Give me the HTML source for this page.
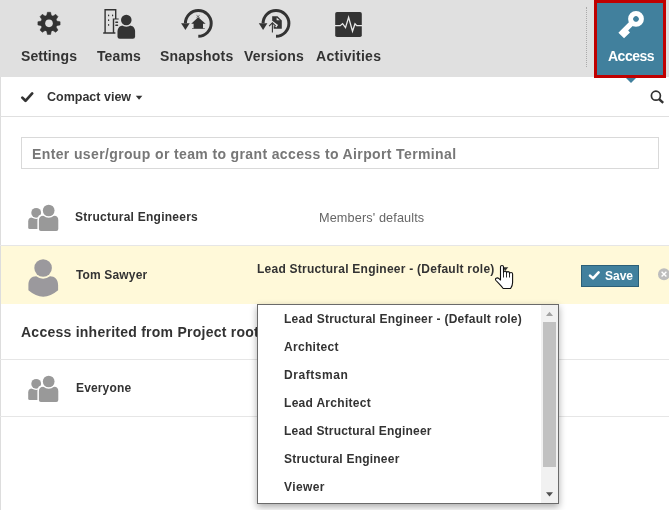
<!DOCTYPE html>
<html><head><meta charset="utf-8">
<style>
*{margin:0;padding:0;box-sizing:border-box}
html,body{width:669px;height:510px;overflow:hidden;background:#fff}
body{position:relative;font-family:"Liberation Sans",sans-serif;color:#333}
.a{position:absolute;white-space:nowrap;line-height:1;will-change:transform}
svg.a{overflow:visible}
.lbl{font-size:14px;font-weight:bold;color:#333}
.b{font-weight:bold}
</style></head><body>
<!-- toolbar -->
<div class="a" style="left:0;top:0;width:669px;height:77px;background:#e0e0e0"></div>
<svg class="a" style="left:0;top:0" width="669" height="77" viewBox="0 0 669 77">
 <!-- gear -->
 <g transform="translate(49 23.35)" fill="#333">
  <circle r="8.4"/>
  <g id="tooth"><path d="M-1.6 -11.1 L1.6 -11.1 L2.6 -6.5 L-2.6 -6.5 Z" stroke="#333" stroke-width="0.5" stroke-linejoin="round"/></g>
  <use href="#tooth" transform="rotate(45)"/><use href="#tooth" transform="rotate(90)"/><use href="#tooth" transform="rotate(135)"/>
  <use href="#tooth" transform="rotate(180)"/><use href="#tooth" transform="rotate(225)"/><use href="#tooth" transform="rotate(270)"/><use href="#tooth" transform="rotate(315)"/>
  <circle r="3.8" fill="#e0e0e0"/>
 </g>
 <!-- teams -->
 <g fill="#333">
  <path d="M104.4 9 H116.4 V18.6 H118.7 V19.6 H114.2 V32.2 H115.4 V33.7 H103.2 V32.2 H104.4 Z M105.8 10.4 V32.2 H112.8 V18.6 H115 V10.4 Z" fill-rule="evenodd"/>
  <rect x="108" y="14.4" width="1.2" height="1.8" rx="0.5"/><rect x="112" y="14.4" width="1.2" height="1.8" rx="0.5"/>
  <rect x="108" y="19.2" width="1.2" height="1.8" rx="0.5"/><rect x="108" y="24" width="1.2" height="1.8" rx="0.5"/>
  <rect x="115.2" y="21.6" width="3" height="1.3" rx="0.6"/><rect x="115.2" y="24.6" width="3" height="1.3" rx="0.6"/>
  <path d="M117.5 36.6 V31.8 C117.5 27.6 120 25.6 123.5 25.6 H129.1 C132.6 25.6 135.1 27.6 135.1 31.8 V36.6 Q135.1 38.8 132.9 38.8 H119.7 Q117.5 38.8 117.5 36.6 Z"/>
  <circle cx="126.3" cy="20" r="6.7" fill="#e0e0e0"/>
  <circle cx="126.3" cy="20" r="5.3"/>
 </g>
 <!-- snapshots -->
 <g fill="none" stroke="#333" stroke-width="3">
  <path d="M198.3 36.25 A12.9 12.9 0 1 0 185.4 23.35"/>
  <path d="M276 36.25 A12.9 12.9 0 1 0 263.1 23.35"/>
 </g>
 <g fill="#333">
  <path d="M181.1 23.2 H189.7 L185.4 29.9 Z"/>
  <path d="M258.8 23.2 H267.4 L263.1 29.9 Z"/>
  <path d="M191.2 23.8 L198.2 17.2 L205.6 23.8 H203 V28.4 H193.6 V23.8 Z"/>
  <path d="M192 28.3 H204.8 V28.9 H192 Z"/>
  <path d="M196.5 15.3 L199.6 17.6 M199.6 15.3 L196.5 17.6" stroke="#333" stroke-width="0.6"/>
  <!-- versions doc -->
  <path d="M272.2 16.3 H277.5 L281.8 20.6 V28.7 H272.2 Z"/>
  <path d="M276.6 17.4 L279.8 20.3 H276.6 Z" fill="#e0e0e0"/>
  <path d="M269.1 26.2 L272.4 22.7 L277.2 26.2" fill="none" stroke="#e0e0e0" stroke-width="3"/>
  <path d="M272.4 23.5 V32.6" fill="none" stroke="#e0e0e0" stroke-width="2.6"/>
  <path d="M269.1 26.2 L272.4 22.9 L275.7 26.2" fill="none" stroke="#333" stroke-width="1.1"/>
  <path d="M272.4 23.2 V32.6" fill="none" stroke="#333" stroke-width="1.1"/>
 </g>
 <!-- activities -->
 <rect x="335.2" y="12" width="26.6" height="25" rx="1.8" fill="#333"/>
 <path d="M335 25.7 H340.2 L342.6 23.6 L345.5 27.6 L348.6 17.4 L352.5 31.3 L355 23.8 L356.8 25.7 H362" fill="none" stroke="#e8e8e8" stroke-width="1.3" stroke-linejoin="miter"/>
</svg>
<div class="a lbl" style="left:21px;top:49px;letter-spacing:0.1px">Settings</div>
<div class="a lbl" style="left:97px;top:49px;letter-spacing:0.1px">Teams</div>
<div class="a lbl" style="left:160px;top:49px;letter-spacing:0.2px">Snapshots</div>
<div class="a lbl" style="left:244px;top:49px;letter-spacing:0.2px">Versions</div>
<div class="a lbl" style="left:316px;top:49px;letter-spacing:0.3px">Activities</div>
<!-- dotted sep -->
<div class="a" style="left:586px;top:7px;width:1px;height:60px;border-left:1px dotted #aaa"></div>
<!-- access -->
<div class="a" style="left:594px;top:0;width:72px;height:78px;background:#c00000"></div>
<div class="a" style="left:597px;top:3px;width:66px;height:72px;background:#41809d"></div>
<svg class="a" style="left:0;top:0" width="669" height="90" viewBox="0 0 669 90">
 <g transform="translate(636 18.9) rotate(45)" fill="#fff">
  <path fill-rule="evenodd" d="M0 -7.9 A7.9 7.9 0 1 1 0 7.9 A7.9 7.9 0 1 1 0 -7.9 Z M0 -2.8 A2.8 2.8 0 1 0 0 2.8 A2.8 2.8 0 1 0 0 -2.8 Z"/>
  <path d="M-2.7 6 H2.7 V13.8 H5.3 V22.2 H-2.7 Z"/>
 </g>
 <path d="M626 78 H636 L631 83 Z" fill="#41809d"/>
</svg>
<div class="a lbl" style="left:608px;top:49px;color:#fff;font-size:14px;letter-spacing:-0.5px">Access</div>
<!-- compact row -->
<div class="a" style="left:0;top:77px;width:1px;height:433px;background:#ddd"></div>
<svg class="a" style="left:0;top:77" width="669" height="40" viewBox="0 77 669 40">
 <path d="M22.3 97.6 L25.5 100.8 L32.2 93.4" fill="none" stroke="#333" stroke-width="2.7" stroke-linecap="round" stroke-linejoin="round"/>
 <path d="M135.8 95.8 H142.3 L139.05 99.8 Z" fill="#333"/>
 <circle cx="655.9" cy="95.7" r="4.5" fill="none" stroke="#333" stroke-width="1.7"/>
 <path d="M659 99 L663.2 102.8" stroke="#333" stroke-width="2.4"/>
</svg>
<div class="a b" style="left:47px;top:91px;font-size:12.5px">Compact view</div>
<div class="a" style="left:0;top:116px;width:669px;height:1px;background:#e0e0e0"></div>
<!-- input -->
<div class="a" style="left:21px;top:137px;width:638px;height:32px;border:1px solid #d9d9d9"></div>
<div class="a b" style="left:31.5px;top:147px;font-size:14px;color:#777;letter-spacing:0.37px">Enter user/group or team to grant access to Airport Terminal</div>
<!-- row 1 -->
<svg class="a" style="left:0;top:0" width="669" height="510" viewBox="0 0 669 510">
 <g id="grp" fill="#999">
  <path d="M28.2 227.5 V221.4 Q28.2 217.4 32.2 217.4 H40.5 Q44.5 217.4 44.5 221.4 V229 H29.7 Q28.2 229 28.2 227.5 Z"/>
  <circle cx="36.2" cy="212.8" r="6.2" fill="#fff"/>
  <circle cx="36.2" cy="212.8" r="4.9"/>
  <path d="M37.4 231.9 V220.3 Q37.4 214.3 42.4 214.3 H55.3 Q59.8 214.3 59.8 220.3 V229.4 Q59.8 231.9 57.3 231.9 H39.9 Q37.4 231.9 37.4 229.4 Z" fill="#fff"/>
  <path d="M38.9 230.9 V220.3 Q38.9 215.8 43.4 215.8 H54.3 Q58.3 215.8 58.3 220.3 V228.9 Q58.3 230.9 56.3 230.9 H40.9 Q38.9 230.9 38.9 228.9 Z"/>
  <circle cx="48.7" cy="210.5" r="7.3" fill="#fff"/>
  <circle cx="48.7" cy="210.5" r="5.85"/>
 </g>
 <use href="#grp" transform="translate(0 171)"/>
</svg>
<div class="a b" style="left:75px;top:211px;font-size:12px;letter-spacing:0.25px">Structural Engineers</div>
<div class="a" style="left:319px;top:212px;font-size:12.7px;color:#666;letter-spacing:0.12px">Members' defaults</div>
<div class="a" style="left:0;top:245px;width:669px;height:1px;background:#e6e6e6"></div>
<!-- row 2 yellow -->
<div class="a" style="left:1px;top:246px;width:668px;height:58px;background:#fff9d9"></div>
<svg class="a" style="left:0;top:0" width="669" height="510" viewBox="0 0 669 510">
 <path fill="#9b999d" d="M28.4 290.3 V285 C28.4 279.5 31.5 276.3 36.2 276.3 A10.8 10.8 0 0 0 50 276.3 C54.7 276.3 58.1 279.5 58.1 285 V290.3 Q43.2 303 28.4 290.3 Z"/>
 <circle cx="43.1" cy="268" r="8.8" fill="#9b999d"/>
 <!-- save button check -->
 <!-- x circle -->
 <circle cx="664" cy="274.2" r="6" fill="#bdbdbd"/>
 <path d="M661.6 271.8 L666.4 276.6 M666.4 271.8 L661.6 276.6" stroke="#fff" stroke-width="1.4"/>
</svg>
<div class="a b" style="left:76px;top:269px;font-size:12px;letter-spacing:0.15px">Tom Sawyer</div>
<div class="a b" style="left:257px;top:263px;font-size:12px;letter-spacing:0.25px">Lead Structural Engineer - (Default role)</div>
<div class="a" style="left:581px;top:265px;width:58px;height:22px;background:#41809d;border:1px solid #2b5f78"></div>
<svg class="a" style="left:0;top:0" width="669" height="510" viewBox="0 0 669 510">
 <path d="M590 275.6 L593 278.4 L598.6 272.4" fill="none" stroke="#fff" stroke-width="2.6" stroke-linecap="round" stroke-linejoin="round"/>
</svg>
<div class="a b" style="left:605px;top:270px;font-size:12px;color:#fff">Save</div>
<!-- heading -->
<div class="a b" style="left:21px;top:325px;font-size:14px;letter-spacing:0.25px">Access inherited from Project root</div>
<div class="a" style="left:0;top:359px;width:669px;height:1px;background:#e6e6e6"></div>
<!-- everyone -->
<div class="a b" style="left:76px;top:382px;font-size:12px;letter-spacing:0.15px">Everyone</div>
<div class="a" style="left:0;top:416px;width:669px;height:1px;background:#e6e6e6"></div>
<!-- dropdown -->
<div class="a" style="left:257px;top:304px;width:302px;height:200px;background:#fff;border:1px solid #6a6a6a;box-shadow:0 3px 7px rgba(0,0,0,0.33)"></div>
<div class="a" style="left:541px;top:305px;width:17px;height:198px;background:#f1f1f1"></div>
<div class="a" style="left:543px;top:322px;width:13px;height:145px;background:#c1c1c1"></div>
<svg class="a" style="left:0;top:0" width="669" height="510" viewBox="0 0 669 510">
 <path d="M546 316 H553 L549.5 311.8 Z" fill="#a3a3a3"/>
 <path d="M546 492.3 H553 L549.5 496.5 Z" fill="#505050"/>
</svg>
<div class="a b" style="left:283.6px;top:313px;font-size:12px;letter-spacing:0.26px">Lead Structural Engineer - (Default role)</div>
<div class="a b" style="left:283.6px;top:341px;font-size:12px;letter-spacing:0.31px">Architect</div>
<div class="a b" style="left:283.6px;top:369px;font-size:12px;letter-spacing:0.55px">Draftsman</div>
<div class="a b" style="left:283.6px;top:397px;font-size:12px;letter-spacing:0.3px">Lead Architect</div>
<div class="a b" style="left:283.6px;top:425px;font-size:12px;letter-spacing:0.21px">Lead Structural Engineer</div>
<div class="a b" style="left:283.6px;top:453px;font-size:12px;letter-spacing:0.22px">Structural Engineer</div>
<div class="a b" style="left:283.6px;top:481px;font-size:12px;letter-spacing:0.4px">Viewer</div>
<!-- cursor -->
<svg class="a" style="left:0;top:0" width="669" height="510" viewBox="0 0 669 510"><path d="M502.3 267.2 H508.3 L505.3 270.8 Z" fill="#333"/></svg>
<svg class="a" style="left:495px;top:265px" width="20" height="26" viewBox="0 0 20 26">
 <path d="M5.5 14 V1.8 Q5.5 0.5 7 0.5 Q8.5 0.5 8.5 1.8 V7.4 Q8.5 6.1 10 6.1 Q11.5 6.1 11.5 7.5 V8 Q11.5 6.6 13 6.6 Q14.5 6.6 14.5 8 V8.8 Q14.5 7.5 16 7.5 Q17.6 7.5 17.6 9 V17.5 Q17.6 20.5 15.6 23.5 H8.2 Q6.5 21.3 3.5 18.2 L1 15.5 Q-0.2 14 1.2 13.2 Q2.6 12.5 4 13.6 L5.5 15 Z" fill="#fff" stroke="#111" stroke-width="1.1" stroke-linejoin="round"/>
 <path d="M8.5 7.5 V12.5 M11.5 8 V12.5 M14.5 8.8 V12.5" stroke="#111" stroke-width="0.9"/>
</svg>
</body></html>
